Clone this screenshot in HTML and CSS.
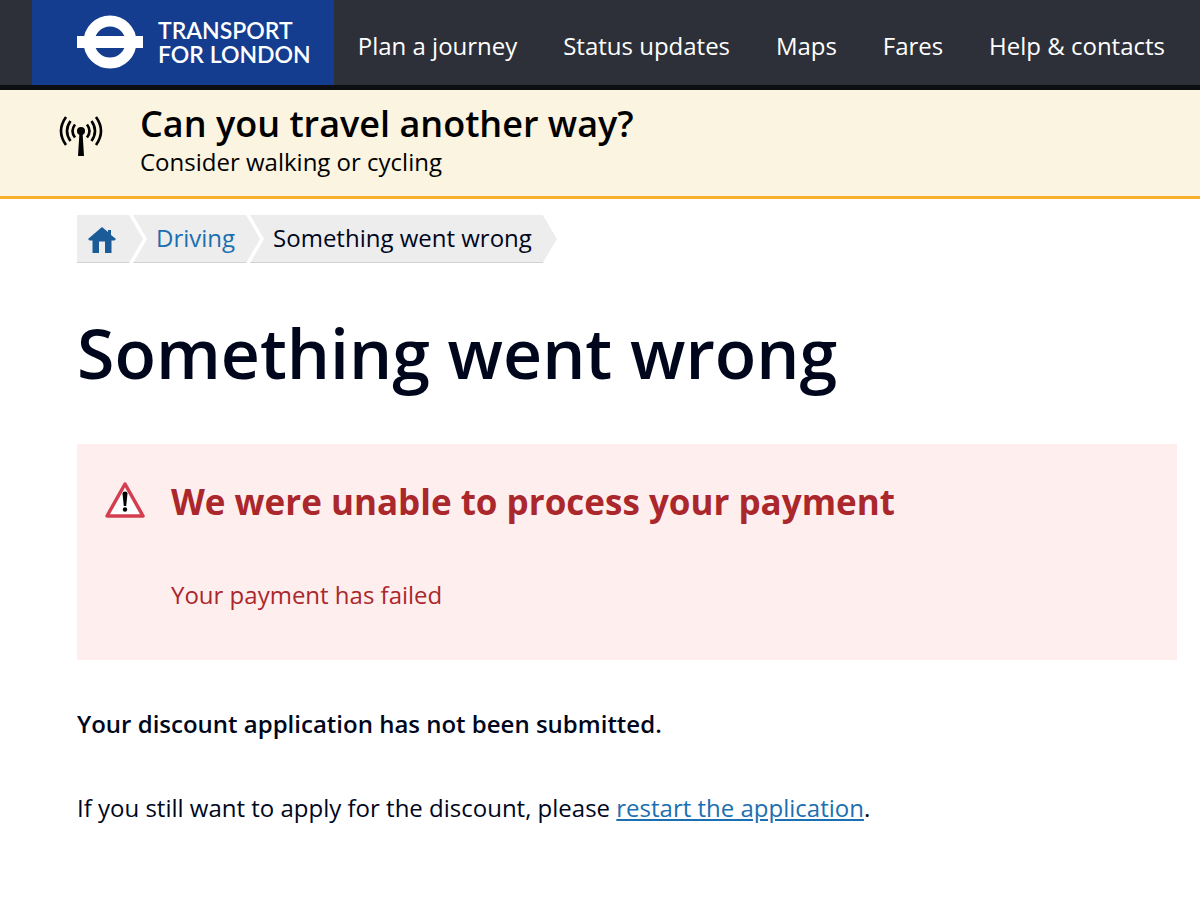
FILE: index.html
```html
<!DOCTYPE html>
<html lang="en">
<head>
    <meta charset="utf-8">
    <meta name="viewport" content="width=device-width, initial-scale=1">
    <title>Something went wrong - Transport for London</title>
    <link rel="stylesheet" href="styles.css">
</head>
<body>

<header class="top-bar">
    <a class="logo" href="#">
        <svg class="roundel" viewBox="0 0 66 54" aria-hidden="true">
            <circle cx="33" cy="27" r="21" fill="none" stroke="#fff" stroke-width="11"/>
            <rect x="0" y="21" width="66" height="12" fill="#fff"/>
        </svg>
        <span class="logo-text">TRANSPORT<br>FOR LONDON</span>
    </a>
    <nav class="main-nav">
        <a href="#">Plan a journey</a>
        <a href="#">Status updates</a>
        <a href="#">Maps</a>
        <a href="#">Fares</a>
        <a href="#">Help &amp; contacts</a>
    </nav>
</header>

<section class="notice">
    <svg class="notice-icon" viewBox="0 0 44 40" aria-hidden="true">
        <circle cx="22" cy="15" r="4"/>
        <path d="M20.5 16h3l1.500 24h-6z"/>
        <g fill="none" stroke="#000" stroke-width="2.600">
            <path d="M16 8.500Q11 15 16 21.500M11.500 5Q4.500 15 11.500 25M7 1Q-3 15 7 29"/>
            <path d="M28 8.500Q33 15 28 21.500M32.500 5Q39.500 15 32.500 25M37 1Q47 15 37 29"/>
        </g>
    </svg>
    <div>
        <h2>Can you travel another way?</h2>
        <p>Consider walking or cycling</p>
    </div>
</section>

<main class="content">
    <nav aria-label="Breadcrumb">
        <ol class="breadcrumbs">
            <li class="home">
                <a href="#" aria-label="Home">
                    <svg viewBox="0 0 28 26" aria-hidden="true">
                        <path d="M14 0l6 5V3h3v5l5 4-1.500 1.500H23.500V26H17V14.500h-6V26H4.500V13.500H1.500L0 12z"/>
                    </svg>
                </a>
            </li>
            <li><a href="#">Driving</a></li>
            <li>Something went wrong</li>
        </ol>
    </nav>

    <h1>Something went wrong</h1>

    <div class="error-box" role="alert">
        <svg class="warning" viewBox="0 0 40 36" aria-hidden="true">
            <path d="M20 2L38 34H2z" fill="#fff" stroke="#d43f50" stroke-width="3.500" stroke-linejoin="round"/>
            <path d="M17.500 11.500q0-2 2.500-2t2.500 2L21.200 24h-2.400z"/>
            <circle cx="20" cy="27.500" r="2.200"/>
        </svg>
        <div>
            <h2>We were unable to process your payment</h2>
            <p>Your payment has failed</p>
        </div>
    </div>

    <p class="status"><strong>Your discount application has not been submitted.</strong></p>
    <p>If you still want to apply for the discount, please <a href="#">restart the application</a>.</p>
</main>

</body>
</html>
```

FILE: styles.css
```css
* {margin: 0; padding: 0; box-sizing: border-box;}

body {
    font-family: "Open Sans", "Noto Sans", sans-serif;
    font-size: 24px;
    line-height: 32px;
    color: #00071d;
    background: #fff;
}

a {color: #1c6fb0;}

/* header */
.top-bar {
    display: flex;
    padding-left: 32px;
    background: #2d3039;
    border-bottom: 5px solid #0d0e11;
}
.logo {
    display: flex;
    align-items: center;
    gap: 15px;
    padding: 0 23px 2px 45px;
    height: 85px;
    background: #153d8f;
    color: #fff;
    text-decoration: none;
}
.roundel {width: 66px; height: 54px;}
.logo-text {
    font-family: Lato, sans-serif;
    font-size: 23px;
    line-height: 24px;
    font-weight: 600;
    white-space: nowrap;
}
.main-nav {
    flex: 1;
    display: flex;
    align-items: center;
    justify-content: space-between;
    padding: 6px 35px 0 24px;
}
.main-nav a {
    color: #fff;
    text-decoration: none;
    white-space: nowrap;
}

/* travel notice */
.notice {
    display: flex;
    gap: 37px;
    padding: 14px 24px 18px 59px;
    background: #faf4e1;
    border-bottom: 3px solid #f6b02e;
}
.notice-icon {width: 44px; height: 40px; margin-top: 12px;}
.notice h2 {
    margin-bottom: 2px;
    font-size: 36px;
    line-height: 40px;
    font-weight: 600;
    color: #000;
}
.notice p {color: #000;}

/* page */
.content {padding: 16px 23px 64px 77px;}

.breadcrumbs {display: flex; list-style: none;}
.breadcrumbs li {
    height: 48px;
    padding: 7px 25px 9px 23px;
    margin-left: -10px;
    background: #ededed;
    border-bottom: 1px solid #d2d2d2;
    clip-path: polygon(0 0, calc(100% - 14px) 0, 100% 50%, calc(100% - 14px) 100%, 0 100%, 14px 50%);
}
.breadcrumbs .home {
    margin-left: 0;
    padding: 12px 27px 9px 11px;
    clip-path: polygon(0 0, calc(100% - 14px) 0, 100% 50%, calc(100% - 14px) 100%, 0 100%);
}
.breadcrumbs a {text-decoration: none;}
.home svg {
    display: block;
    width: 28px;
    height: 26px;
    fill: #1b5c98;
}

h1 {
    margin: 50px 0 51px;
    font-size: 68px;
    line-height: 80px;
    font-weight: 600;
}

.error-box {
    display: flex;
    gap: 26px;
    padding: 38px 28px 49px;
    background: #ffeeee;
    color: #aa272c;
}
.warning {flex: none; width: 40px; height: 36px;}
.error-box h2 {
    margin-bottom: 57px;
    font-size: 35px;
    line-height: 40px;
    font-weight: 700;
}

.status {margin: 48px 0 52px;}
.status strong {font-weight: 600;}
```
